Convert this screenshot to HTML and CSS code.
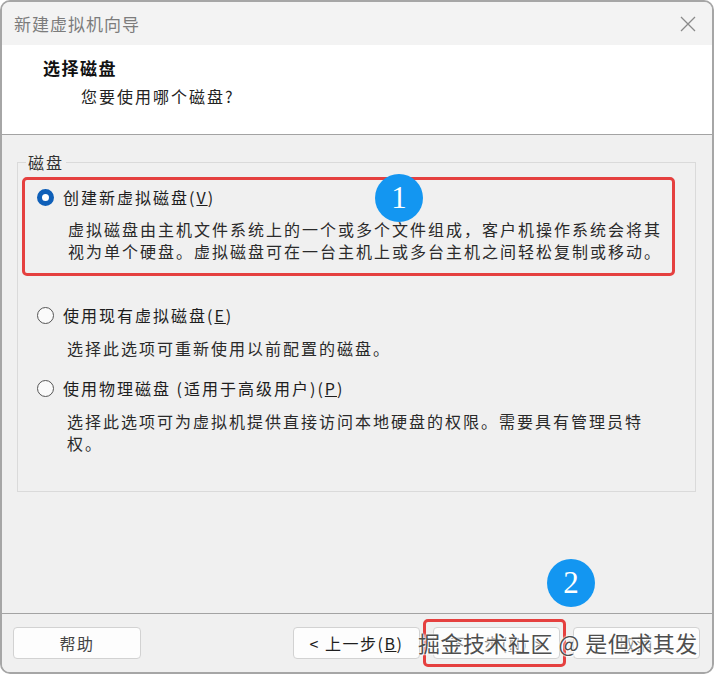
FILE: index.html
```html
<!DOCTYPE html>
<html lang="zh-CN">
<head>
<meta charset="utf-8">
<title>新建虚拟机向导</title>
<link rel="stylesheet" href="styles.css">
</head>
<body>
<div class="window">
  <div class="titlebar">
    <span class="title">新建虚拟机向导</span>
    <svg class="close" width="16" height="16" viewBox="0 0 16 16"><path d="M1 1L15 15M15 1L1 15" stroke="#8a8a8a" stroke-width="1.3" fill="none"/></svg>
  </div>
  <div class="header">
    <div class="h-title">选择磁盘</div>
    <div class="h-sub">您要使用哪个磁盘?</div>
  </div>
  <div class="content">
    <fieldset class="group">
      <legend>磁盘</legend>
      <div class="option opt1">
        <div class="opt-label"><span class="radio checked"></span><span>创建新虚拟磁盘(<u>V</u>)</span></div>
        <div class="desc">虚拟磁盘由主机文件系统上的一个或多个文件组成，客户机操作系统会将其<br>视为单个硬盘。虚拟磁盘可在一台主机上或多台主机之间轻松复制或移动。</div>
      </div>
      <div class="option opt2">
        <div class="opt-label"><span class="radio"></span><span>使用现有虚拟磁盘(<u>E</u>)</span></div>
        <div class="desc">选择此选项可重新使用以前配置的磁盘。</div>
      </div>
      <div class="option opt3">
        <div class="opt-label"><span class="radio"></span><span>使用物理磁盘 (适用于高级用户)(<u>P</u>)</span></div>
        <div class="desc">选择此选项可为虚拟机提供直接访问本地硬盘的权限。需要具有管理员特<br>权。</div>
      </div>
    </fieldset>
  </div>
  <div class="footer">
    <button class="btn help">帮助</button>
    <div class="spacer"></div>
    <button class="btn">&lt; 上一步(<u>B</u>)</button>
    <button class="btn next">下一步(<u>N</u>) &gt;</button>
    <button class="btn cancel">取消</button>
  </div>

  <div class="mark mark1"></div>
  <div class="badge badge1">1</div>
  <div class="badge badge2">2</div>
  <div class="mark mark2"></div>
  <div class="watermark">掘金技术社区 @ 是但求其发</div>
</div>
</body>
</html>
```
FILE: styles.css
```css
* { box-sizing: border-box; }
html, body { margin: 0; padding: 0; background: #ffffff; }
body {
  font-family: "Noto Sans CJK SC", "Noto Sans", sans-serif;
  color: #222;
}
.window {
  position: relative;
  width: 714px;
  height: 674px;
  border: 2px solid #a6a6a6;
  border-radius: 10px;
  overflow: hidden;
  display: flex;
  flex-direction: column;
  background: #f0f0f0;
}
.titlebar {
  height: 43px;
  flex: none;
  background: #f3f3f3;
  display: flex;
  align-items: center;
  justify-content: space-between;
  padding: 0 16px 0 12px;
}
.title {
  font-size: 17px;
  letter-spacing: 1px;
  color: #7c7c7c;
  line-height: 22px;
}
.close { display: block; }
.header {
  height: 90px;
  flex: none;
  background: #ffffff;
  border-bottom: 1px solid #a3a3a3;
  padding: 12px 0 0 41px;
}
.h-title {
  font-size: 17px;
  font-weight: bold;
  letter-spacing: 1.5px;
  line-height: 22px;
  color: #111;
}
.h-sub {
  margin: 6px 0 0 38px;
  font-size: 16px;
  letter-spacing: 2px;
  line-height: 22px;
  color: #222;
}
.content {
  flex: 1;
  background: #f0f0f0;
  padding: 17px 16px 0 15px;
}
.group {
  margin: 0;
  padding: 14px 0 37px 0;
  border: 1px solid #dadada;
  min-width: 0;
}
.group legend {
  margin-left: 8px;
  padding: 0 2px;
  font-size: 16px;
  letter-spacing: 2px;
  line-height: 20px;
  color: #333;
}
.option { margin-left: 19px; }
.opt2 { margin-top: 42px; }
.opt3 { margin-top: 18px; }
.opt-label {
  display: flex;
  align-items: center;
  gap: 9px;
  font-size: 16px;
  letter-spacing: 2px;
  line-height: 22px;
  color: #1e1e1e;
}
.radio {
  width: 17px;
  height: 17px;
  flex: none;
  border-radius: 50%;
  border: 1px solid #555;
  background: #fafafa;
}
.radio.checked {
  border: 5px solid #0f5fb8;
  background: #ffffff;
}
.desc {
  margin: 10px 0 0 31px;
  font-size: 16px;
  letter-spacing: 2px;
  line-height: 22px;
  color: #2a2a2a;
  white-space: nowrap;
}
.opt2 .desc, .opt3 .desc { margin-top: 11px; margin-left: 30px; }
.footer {
  height: 59px;
  flex: none;
  border-top: 1px solid #a3a3a3;
  background: #f0f0f0;
  display: flex;
  align-items: flex-start;
  gap: 13px;
  padding: 13px 12px 0 11px;
}
.spacer { flex: 1; }
.btn {
  width: 127px;
  height: 32px;
  border: 1px solid #d2d2d2;
  border-radius: 4px;
  background: #fdfdfd;
  font-family: "Noto Sans CJK SC", "Noto Sans", sans-serif;
  font-size: 16px;
  letter-spacing: 1.5px;
  color: #1e1e1e;
  padding: 0;
}
.btn.help { width: 128px; color: #444; }
.btn.next, .btn.cancel { color: #8a8a8a; }
.mark {
  position: absolute;
  border: 3px solid #e5403f;
  border-radius: 5px;
}
.mark1 { left: 20px; top: 175px; width: 653px; height: 99px; }
.mark2 { left: 421px; top: 617px; width: 143px; height: 48px; }
.badge {
  position: absolute;
  width: 48px;
  height: 48px;
  border-radius: 50%;
  background: #1396f1;
  color: #ffffff;
  font-family: "Liberation Serif", serif;
  font-size: 31px;
  line-height: 48px;
  text-align: center;
}
.badge1 { left: 373px; top: 172px; }
.badge2 { left: 545px; top: 557px; }
.watermark {
  position: absolute;
  left: 416px;
  top: 624px;
  font-size: 22px;
  line-height: 32px;
  letter-spacing: 0.5px;
  color: #4e4e4e;
  white-space: nowrap;
  text-shadow: 0 0 2px #fff, 0 0 2px #fff, 1px 1px 1px #fff;
}
```
